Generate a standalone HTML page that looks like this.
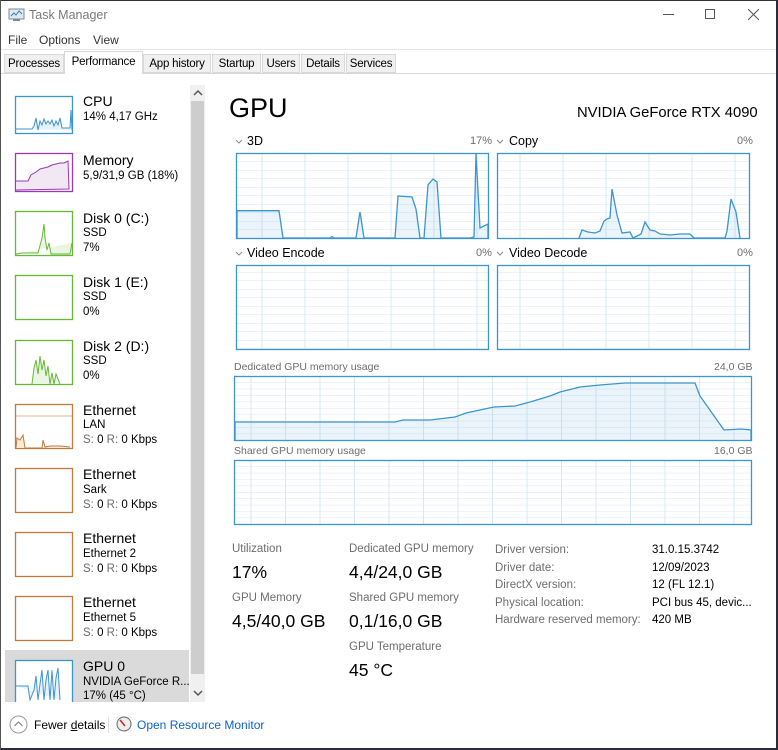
<!DOCTYPE html>
<html><head><meta charset="utf-8"><style>
*{margin:0;padding:0;box-sizing:border-box}
body{width:778px;height:750px;overflow:hidden;background:#fff;font-family:"Liberation Sans",sans-serif;color:#000;position:relative}
.a{position:absolute;white-space:nowrap}
.t{font-size:14px}
.s{font-size:11.5px}
.g{color:#6d6d6d}
.tab{position:absolute;top:54px;height:19px;border:1px solid #d9d9d9;background:#f0f0f0;font-size:11.5px;padding:3px 0 0 0;text-align:center;white-space:nowrap;overflow:hidden;letter-spacing:-0.2px}
.lbl{font-size:11.5px;color:#6d6d6d}
.big{font-size:17.5px}
</style></head><body>
<div class="a" style="left:0;top:0;width:778px;height:1px;background:#333"></div>
<div class="a" style="left:776px;top:0;width:2px;height:750px;background:#2b2b3b"></div>
<div class="a" style="left:0;top:748px;width:778px;height:2px;background:#2b2b3b"></div>
<div class="a" style="left:0;top:0;width:1px;height:750px;background:#555"></div>
<!-- title bar -->
<svg class="a" style="left:8px;top:8px" width="17" height="14"><rect x="1" y="1" width="15" height="10" fill="#dfe8ef" stroke="#7a8a98"/><polyline points="3,8 6,5 8,7 11,3 14,6" fill="none" stroke="#2f7fc0"/><rect x="5" y="11" width="7" height="2" fill="#7a8a98"/></svg>
<div class="a" style="left:29px;top:8px;font-size:12.5px;color:#7a7a7a">Task Manager</div>
<div class="a" style="left:663px;top:14px;width:11px;height:1px;background:#555"></div>
<div class="a" style="left:705px;top:9px;width:10px;height:10px;border:1px solid #555"></div>
<svg class="a" style="left:748px;top:9px" width="11" height="11"><path d="M0 0L11 11M11 0L0 11" stroke="#555"/></svg>
<!-- menu -->
<div class="a" style="left:8px;top:33px;font-size:12px;color:#333">File</div>
<div class="a" style="left:39px;top:33px;font-size:12px;color:#333">Options</div>
<div class="a" style="left:93px;top:33px;font-size:12px;color:#333">View</div>
<div class="a" style="left:1px;top:49px;width:775px;height:1px;background:#e6e6e6"></div>
<!-- tabs -->
<div class="a" style="left:1px;top:73px;width:775px;height:1px;background:#d9d9d9"></div>
<div class="tab" style="left:4px;width:60px">Processes</div>
<div class="tab" style="left:64px;top:51px;height:23px;width:79px;background:#fff;border-bottom:none;padding-top:4px">Performance</div>
<div class="tab" style="left:143px;width:68px">App history</div>
<div class="tab" style="left:212px;width:49px">Startup</div>
<div class="tab" style="left:262px;width:38px">Users</div>
<div class="tab" style="left:301px;width:44px">Details</div>
<div class="tab" style="left:346px;width:50px">Services</div>
<!-- sidebar -->
<div class="a" style="left:190px;top:85px;width:15px;height:617px;background:#f0f0f0"></div>
<div class="a" style="left:191px;top:101px;width:13px;height:573px;background:#cdcdcd"></div>
<svg class="a" style="left:193px;top:89px" width="10" height="8"><path d="M1 6L5 2L9 6" fill="none" stroke="#555" stroke-width="1.5"/></svg>
<svg class="a" style="left:193px;top:689px" width="10" height="8"><path d="M1 2L5 6L9 2" fill="none" stroke="#555" stroke-width="1.5"/></svg>
<div class="a" style="left:5px;top:650px;width:184px;height:52px;background:#dadada"></div>

<svg class="a" style="left:0;top:0" width="190" height="702">
<g fill="#fff" stroke-width="1.3">
<rect x="15.5" y="96.5" width="57" height="37" stroke="#3b95cf"/>
<rect x="15.5" y="153.5" width="57" height="38" stroke="#9b39b5"/>
<rect x="15.5" y="211.5" width="57" height="44" stroke="#66b83b"/>
<rect x="15.5" y="275.5" width="57" height="44" stroke="#66b83b"/>
<rect x="15.5" y="340.5" width="57" height="44" stroke="#66b83b"/>
<rect x="15.5" y="404.5" width="57" height="44" stroke="#c27a3a"/>
<rect x="15.5" y="468.5" width="57" height="44" stroke="#c27a3a"/>
<rect x="15.5" y="532.5" width="57" height="44" stroke="#c27a3a"/>
<rect x="15.5" y="596.5" width="57" height="44" stroke="#c27a3a"/>
<rect x="15.5" y="660.5" width="57" height="50" stroke="#3b95cf"/>
</g>
<polyline points="16,129 32,129 34,126 36,118 38,130 40,121 42,125 44,119 46,124 48,121 50,124 52,120 54,126 56,121 58,125 60,118 62,128 66,128 70,128 71,110 72,130" fill="#e7f1f8" stroke="#3b95cf"/>
<polyline points="16,181 28,181 31,175 36,172 40,169 44,168 48,167 52,165 56,164 60,163 64,163 68,161 69,189 16,190" fill="#f1e8f4" stroke="#9b39b5"/>
<polyline points="16,254 22,253 30,253 38,253 42,238 44,224 45,238 47,250 49,243 51,254 60,254 70,254 72,243" fill="#eaf5e2" stroke="#66b83b"/>
<polyline points="32,384 34,368 36,360 38,374 40,356 42,370 44,360 46,376 48,366 50,384 52,373 54,384 56,374 60,384" fill="#eaf5e2" stroke="#66b83b"/>
<line x1="16" y1="416" x2="72" y2="416" stroke="#e4b58e"/>
<polyline points="16,448 17,438 20,440 23,435 25,448 42,448 43,440 45,447 50,446 60,446 70,447" fill="#f8ecdf" stroke="#c27a3a"/>
<polyline points="16,686 28,686 30,700 34,690 36,676 38,700 40,684 42,670 44,700 46,680 48,670 50,700 52,670 54,700 56,678 58,668 60,700" fill="#e7f1f8" stroke="#3b95cf"/>
</svg>

<div class="a t" style="left:83px;top:93px">CPU</div><div class="a s" style="left:83px;top:111px">14% 4,17 GHz</div>
<div class="a t" style="left:83px;top:152px">Memory</div><div class="a s" style="left:83px;top:170px">5,9/31,9 GB (18%)</div>
<div class="a t" style="left:83px;top:210px">Disk 0 (C:)</div><div class="a s" style="left:83px;top:227px">SSD</div><div class="a s" style="left:83px;top:242px">7%</div>
<div class="a t" style="left:83px;top:274px">Disk 1 (E:)</div><div class="a s" style="left:83px;top:291px">SSD</div><div class="a s" style="left:83px;top:306px">0%</div>
<div class="a t" style="left:83px;top:338px">Disk 2 (D:)</div><div class="a s" style="left:83px;top:355px">SSD</div><div class="a s" style="left:83px;top:370px">0%</div>
<div class="a t" style="left:83px;top:402px">Ethernet</div><div class="a s" style="left:83px;top:419px">LAN</div><div class="a s" style="left:83px;top:434px"><span class="g">S:</span> 0 <span class="g">R:</span> 0 Kbps</div>
<div class="a t" style="left:83px;top:466px">Ethernet</div><div class="a s" style="left:83px;top:484px">Sark</div><div class="a s" style="left:83px;top:499px"><span class="g">S:</span> 0 <span class="g">R:</span> 0 Kbps</div>
<div class="a t" style="left:83px;top:530px">Ethernet</div><div class="a s" style="left:83px;top:548px">Ethernet 2</div><div class="a s" style="left:83px;top:563px"><span class="g">S:</span> 0 <span class="g">R:</span> 0 Kbps</div>
<div class="a t" style="left:83px;top:594px">Ethernet</div><div class="a s" style="left:83px;top:612px">Ethernet 5</div><div class="a s" style="left:83px;top:627px"><span class="g">S:</span> 0 <span class="g">R:</span> 0 Kbps</div>
<div class="a t" style="left:83px;top:658px">GPU 0</div><div class="a s" style="left:83px;top:676px">NVIDIA GeForce R...</div><div class="a s" style="left:83px;top:690px;height:12px;overflow:hidden">17% (45 °C)</div>

<!-- main -->
<div class="a" style="left:229px;top:93px;font-size:27px">GPU</div>
<div class="a" style="left:577px;top:105px;font-size:14.8px">NVIDIA GeForce RTX 4090</div>

<svg class="a" style="left:0;top:0" width="778" height="750">
<defs>
<pattern id="gs" x="236" y="153" width="43" height="8.5" patternUnits="userSpaceOnUse">
<path d="M26 0V8.5M0 0H43" stroke="#d7e8f3" stroke-width="1" fill="none"/>
</pattern>
<pattern id="gm" x="234" y="376" width="34.5" height="6.4" patternUnits="userSpaceOnUse">
<path d="M17 0V6.4M0 0H34.5" stroke="#d7e8f3" stroke-width="1" fill="none"/>
</pattern>
<pattern id="gm2" x="234" y="460" width="34.5" height="6.4" patternUnits="userSpaceOnUse">
<path d="M17 0V6.4M0 0H34.5" stroke="#d7e8f3" stroke-width="1" fill="none"/>
</pattern>
</defs>
<g stroke="#3b95cf" stroke-width="1.3">
<rect x="236.5" y="153.5" width="252" height="85" fill="url(#gs)"/>
<rect x="497.5" y="153.5" width="252" height="85" fill="url(#gs)"/>
<rect x="236.5" y="265.5" width="252" height="84" fill="url(#gs)"/>
<rect x="497.5" y="265.5" width="252" height="84" fill="url(#gs)"/>
<rect x="234.5" y="376.5" width="517" height="64" fill="url(#gm)"/>
<rect x="234.5" y="460.5" width="517" height="64" fill="url(#gm2)"/>
</g>
<g stroke="#3b95cf" stroke-width="1.3" fill="rgba(59,149,207,0.1)">
<polyline points="237,238 237,210.7 279,210.7 283,238 330,238 332,236.5 334,238 356,238 360,212 364,238 395,238 398,196 412,197 416,209 420,238 424,238 428,185 433,179 437,182 441,238 470,238 474,237 476,154 480,228 488,224 488,238"/>
<polyline points="579,238 582,230 588,232 595,233 600,231 604,221 607,219 610,218 612,189 617,215 622,233 630,232 633,238 641,234 645,222 650,230 655,231 660,234 670,235 680,234 690,234 694,238 725,238 727,231 731,199 736,212 740,238"/>
<polyline points="235,440 235,422 395,422 403,420 430,420 455,417 466,413 480,410 494,407 515,406 530,402 540,399 550,396 560,392 580,387 600,385 625,383 695,383 700,396 712,413 724,430 741,429 751,430 751,440"/>
</g>
<path d="M236 140L239 143L242 140M497 140L500 143L503 140M236 252L239 255L242 252M497 252L500 255L503 252" stroke="#888" fill="none"/>
</svg>
<div class="a" style="left:247px;top:134px;font-size:12.5px">3D</div>
<div class="a g" style="left:470px;top:135px;font-size:11px">17%</div>
<div class="a" style="left:509px;top:134px;font-size:12.5px">Copy</div>
<div class="a g" style="left:737px;top:135px;font-size:11px">0%</div>
<div class="a" style="left:247px;top:246px;font-size:12.5px">Video Encode</div>
<div class="a g" style="left:476px;top:247px;font-size:11px">0%</div>
<div class="a" style="left:509px;top:246px;font-size:12.5px">Video Decode</div>
<div class="a g" style="left:737px;top:247px;font-size:11px">0%</div>
<div class="a g" style="left:234px;top:361px;font-size:10.5px">Dedicated GPU memory usage</div>
<div class="a g" style="left:714px;top:361px;font-size:10.5px">24,0 GB</div>
<div class="a g" style="left:234px;top:445px;font-size:10.5px">Shared GPU memory usage</div>
<div class="a g" style="left:714px;top:445px;font-size:10.5px">16,0 GB</div>

<div class="a lbl" style="left:232px;top:543px">Utilization</div>
<div class="a big" style="left:232px;top:562px">17%</div>
<div class="a lbl" style="left:232px;top:592px">GPU Memory</div>
<div class="a big" style="left:232px;top:611px">4,5/40,0 GB</div>
<div class="a lbl" style="left:349px;top:543px">Dedicated GPU memory</div>
<div class="a big" style="left:349px;top:562px">4,4/24,0 GB</div>
<div class="a lbl" style="left:349px;top:592px">Shared GPU memory</div>
<div class="a big" style="left:349px;top:611px">0,1/16,0 GB</div>
<div class="a lbl" style="left:349px;top:641px">GPU Temperature</div>
<div class="a big" style="left:349px;top:660px">45 °C</div>

<div class="a lbl" style="left:495px;top:542px;line-height:17.5px">Driver version:<br>Driver date:<br>DirectX version:<br>Physical location:<br>Hardware reserved memory:</div>
<div class="a" style="left:652px;top:542px;line-height:17.5px;font-size:11.5px">31.0.15.3742<br>12/09/2023<br>12 (FL 12.1)<br>PCI bus 45, devic...<br>420 MB</div>

<!-- footer -->
<svg class="a" style="left:9px;top:715px" width="19" height="19"><circle cx="9.5" cy="9.5" r="8.5" fill="none" stroke="#999"/><path d="M5.5 11L9.5 7L13.5 11" fill="none" stroke="#777"/></svg>
<div class="a" style="left:34px;top:718px;font-size:12px">Fewer <u>d</u>etails</div>
<div class="a" style="left:108px;top:717px;width:1px;height:16px;background:#ddd"></div>
<svg class="a" style="left:116px;top:716px" width="16" height="16"><circle cx="8" cy="8" r="7" fill="#eee" stroke="#666"/><path d="M4 4L9 10" stroke="#c22" stroke-width="1.5"/></svg>
<div class="a" style="left:137px;top:718px;font-size:12px;color:#0a64c8">Open Resource Monitor</div>
</body></html>
